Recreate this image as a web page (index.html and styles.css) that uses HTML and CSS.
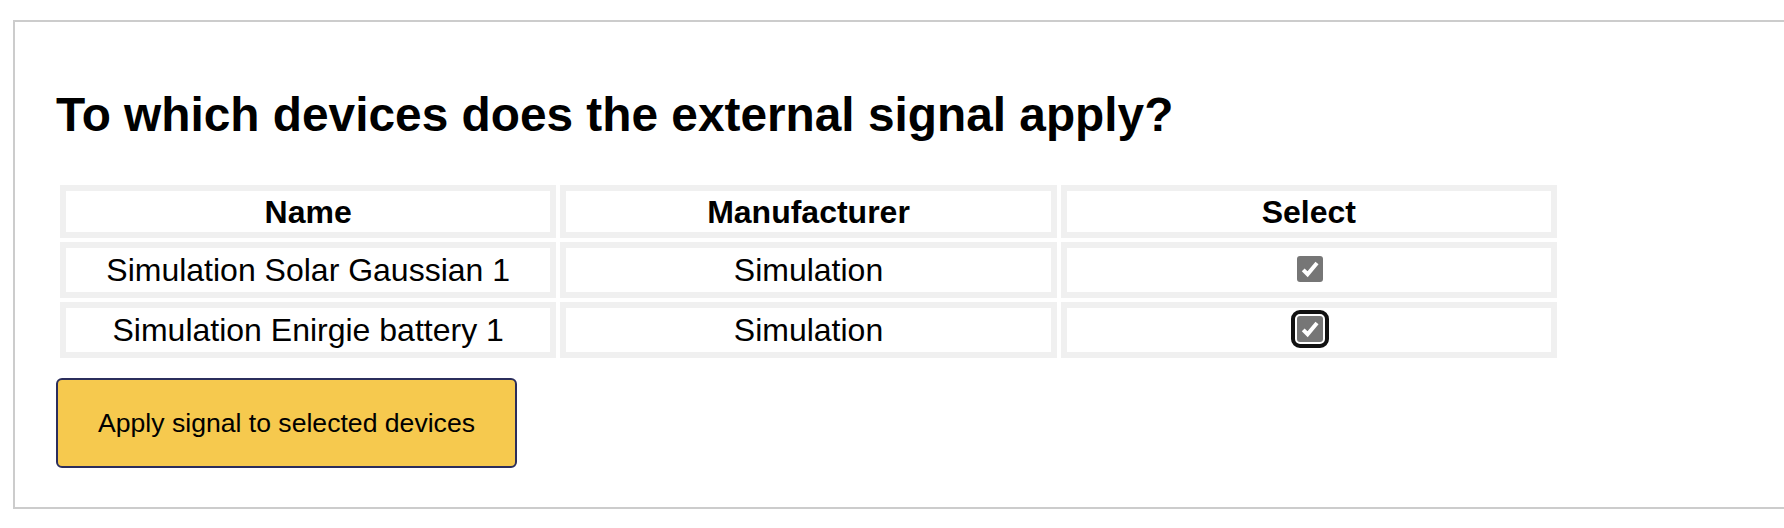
FILE: index.html
```html
<!DOCTYPE html>
<html>
<head>
  <title>External signal</title>
  <link rel="stylesheet" href="styles.css">
</head>
<body>
  <div class="panel">
    <h1 class="title">To which devices does the external signal apply?</h1>

    <table class="devices">
      <tr>
        <th>Name</th>
        <th>Manufacturer</th>
        <th>Select</th>
      </tr>
      <tr>
        <td>Simulation Solar Gaussian 1</td>
        <td>Simulation</td>
        <td>
          <span class="check">
            <svg viewBox="0 0 26 26" width="26" height="26"><path d="M6.2 13.8 L10.6 18.2 L20 7" fill="none" stroke="#fff" stroke-width="4"/></svg>
          </span>
        </td>
      </tr>
      <tr>
        <td>Simulation Enirgie battery 1</td>
        <td>Simulation</td>
        <td>
          <span class="check focused">
            <svg viewBox="0 0 26 26" width="26" height="26"><path d="M6.2 13.8 L10.6 18.2 L20 7" fill="none" stroke="#fff" stroke-width="4"/></svg>
          </span>
        </td>
      </tr>
    </table>

    <button class="btn">Apply signal to selected devices</button>
  </div>
</body>
</html>
```

FILE: styles.css
```css
* {
  box-sizing: border-box;
}

body {
  margin: 0;
  font-family: "Liberation Sans", Arial, sans-serif;
  color: #000;
  background: #fff;
}

.panel {
  margin: 20px 0 0 13px;
  border: 2px solid #cccccc;
  border-right: none;
  padding: 34px 0 39px 41px;
}

.title {
  margin: 31px 0 39px 0;
  font-size: 47.8px;
  line-height: 55px;
  font-weight: bold;
}

.devices {
  width: 1505px;
  table-layout: fixed;
  border-spacing: 4px;
  border-collapse: separate;
}

.devices th,
.devices td {
  border: 6px solid #f0f0f0;
  text-align: center;
  font-size: 32px;
  line-height: 36px;
}

.devices th {
  padding: 3px 0 2px 0;
  font-weight: bold;
}

.devices td {
  padding: 4px 0;
}

.check {
  display: inline-block;
  vertical-align: top;
  margin: 4px 0 0 2px;
  width: 26px;
  height: 26px;
  border-radius: 3px;
  background: #767676;
}

.check svg {
  display: block;
}

.check.focused {
  outline: 4px solid #111;
  outline-offset: 2px;
}

.btn {
  display: block;
  margin-top: 16px;
  width: 461px;
  height: 90px;
  border: 2px solid #2b2e5c;
  border-radius: 6px;
  background: #f6c94e;
  color: #000;
  font-family: "Liberation Sans", Arial, sans-serif;
  font-size: 26.6px;
  cursor: pointer;
}
```
